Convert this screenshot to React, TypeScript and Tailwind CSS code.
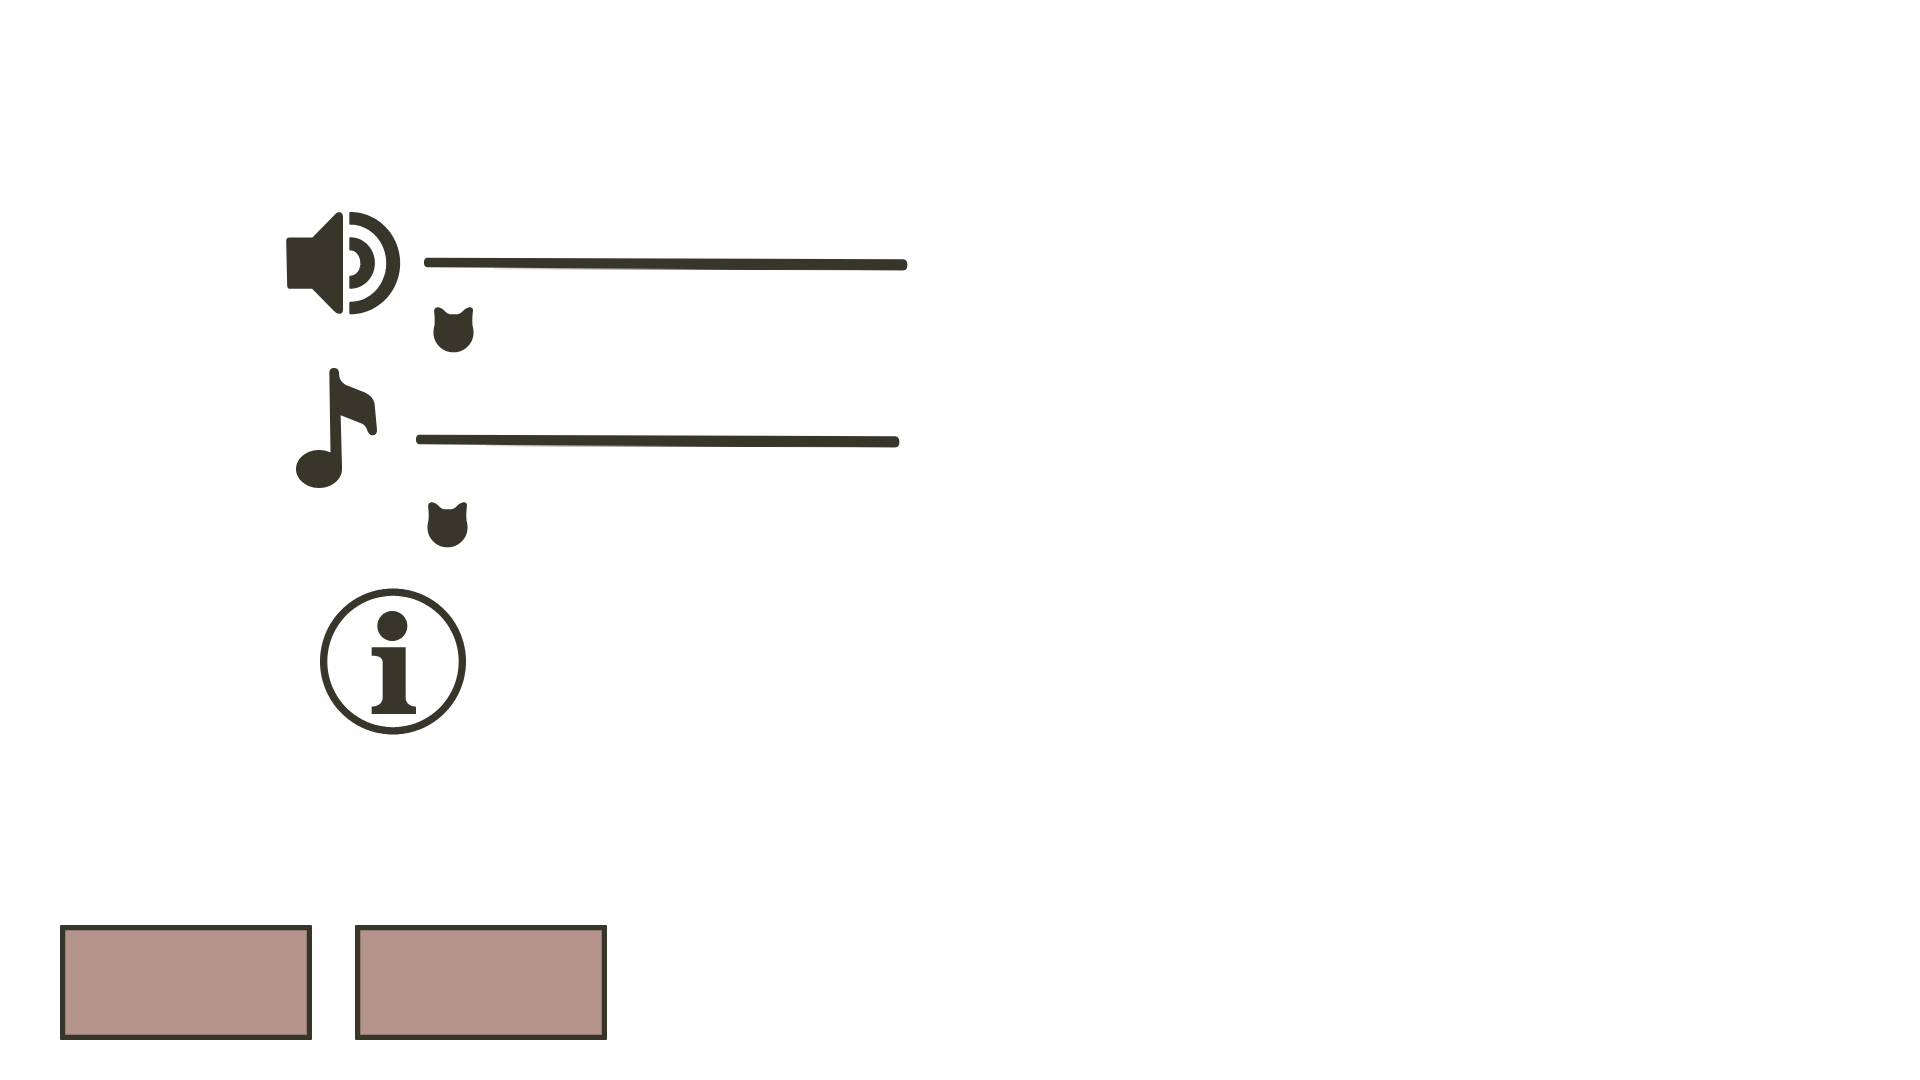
const ink = "#38352b";

function ell(cx: number, cy: number, rx: number, ry: number, fromDeg: number, toDeg: number, n = 90) {
  const pts: string[] = [];
  for (let i = 0; i <= n; i++) {
    const a = ((fromDeg + ((toDeg - fromDeg) * i) / n) * Math.PI) / 180;
    pts.push(`${(cx + rx * Math.cos(a)).toFixed(2)} ${(cy + ry * Math.sin(a)).toFixed(2)}`);
  }
  return pts.join(" L");
}

function smooth(d: string) {
  const t = d.trim().split(/\s+/);
  let i = 0;
  let x = 0;
  let y = 0;
  const out: string[] = [];
  while (i < t.length) {
    const c = t[i++];
    if (c === "M" || c === "L") {
      x = +t[i++];
      y = +t[i++];
      out.push(`${c}${x} ${y}`);
    } else if (c === "Q") {
      const cx = +t[i++];
      const cy = +t[i++];
      const ex = +t[i++];
      const ey = +t[i++];
      for (let k = 1; k <= 24; k++) {
        const u = k / 24;
        const v = 1 - u;
        out.push(
          `L${(v * v * x + 2 * v * u * cx + u * u * ex).toFixed(2)} ${(v * v * y + 2 * v * u * cy + u * u * ey).toFixed(2)}`
        );
      }
      x = ex;
      y = ey;
    } else if (c === "Z") {
      out.push("Z");
    }
  }
  return out.join(" ");
}

const speakerBody = smooth(
  "M 56 114 L 126 114 L 196 42 Q 206 34 213 40 Q 218 44 218 52 L 218 330 Q 218 345 205 343 Q 198 342 190 334 L 125 268 L 58 268 Q 50 268 50 258 L 47 125 Q 47 114 56 114 Z"
);
const outerArc = `M${ell(240, 191, 147, 151, -90, 90)} L${ell(240, 191, 111, 119, 90, -90)} Z`;
const innerArc = `M${ell(240, 190.5, 71, 74.5, -90, 90)} L${ell(240, 190.5, 33, 41, 90, -90)} Z`;
const noteTop = smooth(
  "M 147 55 Q 147 40 161 40 Q 175 40 176 55 Q 176 78 195 90 L 250 112 Q 280 125 283 150 L 290 225 Q 290 242 276 242 Q 266 242 260 225 Q 255 210 240 205 L 181 182 L 185 335"
);
const notePath = `${noteTop} L${ell(116, 343, 69, 57, 0, 300)} Z`;
const infoRing = `M${ell(249, 242.5, 219, 219, 0, 360, 240)} Z M${ell(249, 242.5, 197, 197, 360, 0, 240)} Z`;
const infoDot = `M${ell(247, 136, 45, 45, 0, 360, 120)} Z`;
const infoStem = smooth(
  "M 185 200 L 287 200 L 287 350 Q 287 375 318 378 L 318 400 L 185 400 L 185 378 Q 218 375 218 350 L 218 245 Q 218 225 185 225 Z"
);
const catTop = smooth(
  "M 71 214 Q 71 200 84 201 Q 94 203 102 211 Q 110 220 120 222 L 142 222 Q 152 220 160 211 Q 168 203 178 201 Q 191 200 189 214 Q 186 240 188 256 Q 191 268 191 278"
);
const catBack = smooth("M 69 278 Q 69 268 72 256 Q 74 240 71 214").replace(/^M69 278 /, "");
const catPath = `${catTop} L${ell(130, 278, 61, 60, 0, 180)} ${catBack} Z`;
const trackPath = smooth(
  "M 52 52 L 1480 57 Q 1492 58 1492 74 Q 1492 90 1480 90 L 55 81 Q 42 81 42 67 Q 42 53 52 52 Z"
);

function Speaker() {
  return (
    <svg viewBox="47 37 345 310" className="block w-[115px] h-[103px] shrink-0" aria-hidden="true">
      <path fill={ink} d={speakerBody} />
      <path fill={ink} stroke={ink} strokeWidth="6" strokeLinejoin="round" d={outerArc} />
      <path fill={ink} stroke={ink} strokeWidth="6" strokeLinejoin="round" d={innerArc} />
    </svg>
  );
}

function Note() {
  return (
    <svg viewBox="47 40 243 360" className="block w-[81px] h-[120px] shrink-0" aria-hidden="true">
      <path fill={ink} d={notePath} />
    </svg>
  );
}

function Info() {
  return (
    <svg viewBox="27 22 441 441" className="block w-[147px] h-[147px]" aria-hidden="true">
      <path fill={ink} fillRule="evenodd" d={infoRing} />
      <path fill={ink} d={infoDot} />
      <path fill={ink} d={infoStem} />
    </svg>
  );
}

function Cat() {
  return (
    <svg viewBox="69 200 122 140" className="block w-[41px] h-[46px]" aria-hidden="true">
      <path fill={ink} d={catPath} />
    </svg>
  );
}

function Track({ id }: { id: string }) {
  return (
    <svg viewBox="42 50 1452 42" className="block w-[484px] h-[14px]" aria-hidden="true">
      <defs>
        <linearGradient id={id} x1="250" x2="1000" y1="0" y2="0" gradientUnits="userSpaceOnUse">
          <stop offset="0" stopColor="#e8e7e4" />
          <stop offset="1" stopColor={ink} />
        </linearGradient>
      </defs>
      <path fill={`url(#${id})`} d="M250 82 L1480 88 L1480 90 L250 87 Z" />
      <path fill={ink} d={trackPath} />
    </svg>
  );
}

function PlainButton({ label }: { label: string }) {
  return (
    <button
      type="button"
      aria-label={label}
      className="block w-[252px] h-[115px] bg-[#b5948b] border-[5px] border-[#38352b] rounded-[1px] shadow-[inset_0_0_0_1px_#8f7b72]"
    />
  );
}

export default function App() {
  return (
    <main className="w-[1920px] h-[1080px] overflow-hidden bg-[#fefefe] pt-[212px]">
      <section className="flex pl-[286px]">
        <Speaker />
        <div className="ml-[23px] pt-[45px]">
          <Track id="track-a" />
          <div className="ml-[9px] mt-[36px]">
            <Cat />
          </div>
        </div>
      </section>

      <section className="flex pl-[296px] mt-[15px]">
        <Note />
        <div className="ml-[39px] pt-[66px]">
          <Track id="track-b" />
          <div className="ml-[11px] mt-[54px]">
            <Cat />
          </div>
        </div>
      </section>

      <section className="pl-[319px] mt-[40px]">
        <Info />
      </section>

      <section className="flex gap-[43px] pl-[60px] mt-[190px]">
        <PlainButton label="Cancel" />
        <PlainButton label="OK" />
      </section>
    </main>
  );
}
